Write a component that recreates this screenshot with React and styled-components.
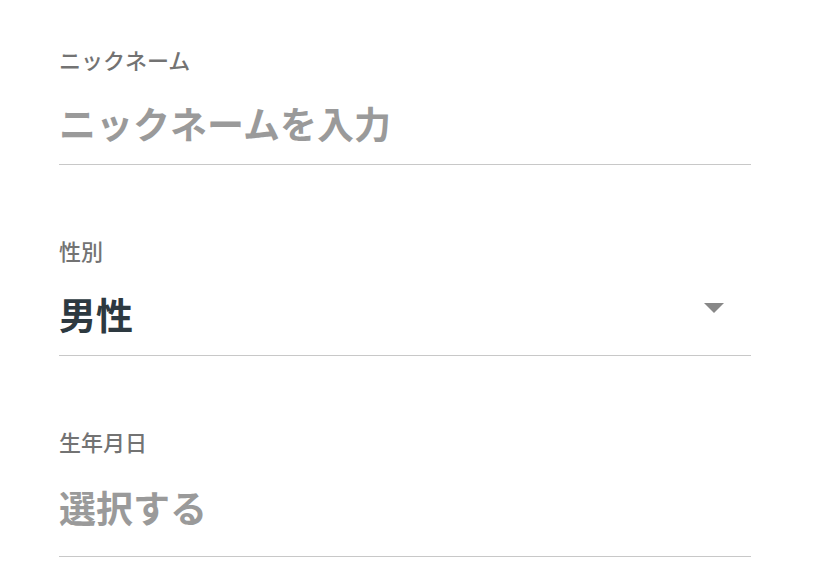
import styled, { createGlobalStyle } from "styled-components";

const GlobalStyle = createGlobalStyle`
  body {
    margin: 0;
    background: #fff;
    font-family: "Noto Sans CJK JP", "Noto Sans", sans-serif;
  }
`;

const Form = styled.div`
  padding: 46px 0 0 59px;
  width: 692px;
  display: flex;
  flex-direction: column;
  gap: 72px;
`;

const Field = styled.div`
  display: flex;
  flex-direction: column;
`;

const Label = styled.div`
  font-size: 22px;
  line-height: 26px;
  font-weight: 500;
  color: #737373;
`;

const Control = styled.div`
  display: flex;
  align-items: center;
  justify-content: space-between;
  margin-top: ${(p) => (p.$tall ? "28px" : "26px")};
  padding-bottom: ${(p) => (p.$tall ? "24px" : "16px")};
  border-bottom: 1px solid #c8c8c8;
`;

const Value = styled.div`
  font-size: 37px;
  line-height: 50px;
  font-weight: 700;
  color: ${(p) => (p.$placeholder ? "#9a9a9a" : "#2d3940")};
`;

const Caret = styled.span`
  width: 0;
  height: 0;
  margin: 0 27px 12px 0;
  border-left: 10px solid transparent;
  border-right: 10px solid transparent;
  border-top: 10px solid #888;
`;

export default function App() {
  return (
    <>
      <GlobalStyle />
      <Form>
        <Field>
          <Label>ニックネーム</Label>
          <Control>
            <Value $placeholder>ニックネームを入力</Value>
          </Control>
        </Field>
        <Field>
          <Label>性別</Label>
          <Control>
            <Value>男性</Value>
            <Caret />
          </Control>
        </Field>
        <Field>
          <Label>生年月日</Label>
          <Control $tall>
            <Value $placeholder>選択する</Value>
          </Control>
        </Field>
      </Form>
    </>
  );
}
